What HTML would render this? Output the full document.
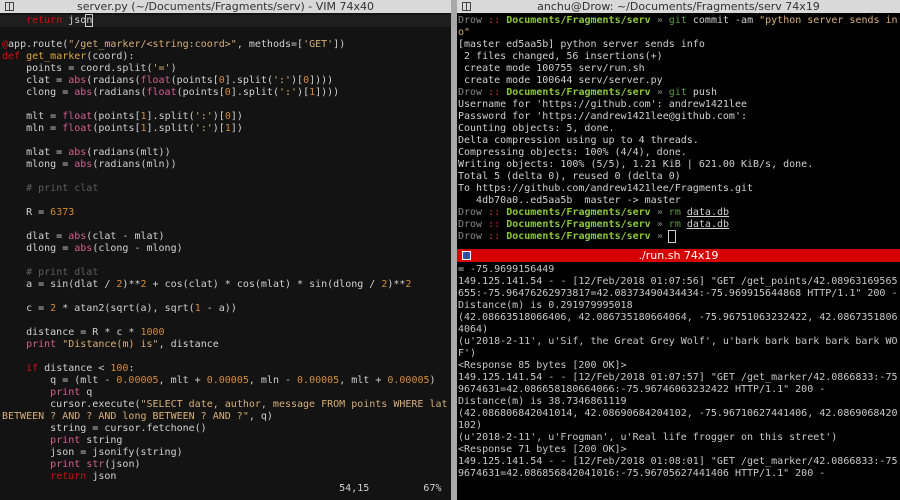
<!DOCTYPE html>
<html><head><meta charset="utf-8"><style>
*{margin:0;padding:0;box-sizing:border-box}
body{width:900px;height:500px;background:#000;overflow:hidden;position:relative;font-family:"DejaVu Sans Mono","Liberation Mono",monospace;font-size:10px;line-height:12px;color:#d0d0d0}
.title{position:absolute;height:13px;background:#d9d9d9;color:#333;font-family:"DejaVu Sans","Liberation Sans",sans-serif;font-size:11px;line-height:13px;text-align:center}
.ico{position:absolute;left:5px;top:2px;width:9px;height:9px;border:1px solid #444}
.ico:after{content:"";position:absolute;left:3px;top:0;width:1px;height:7px;background:#444}
pre{font:inherit;white-space:pre;position:absolute}
#left{position:absolute;left:0;top:13px;width:451px;height:487px;background:#131313}
#div{position:absolute;left:451px;top:0;width:6px;height:500px;background:#a8a8a8}
#rt{position:absolute;left:457px;top:13px;width:443px;height:236px;background:#000}
#rb{position:absolute;left:457px;top:262px;width:443px;height:238px;background:#000}
.cl{position:absolute;left:0;top:2px;width:451px;height:12px;background:#1e1e1e}
.k{color:#d01010}.p{color:#d35f8a}.s{color:#d7ae78}.n{color:#d48a3a}.f{color:#d7a640}.c{color:#5e5e5e}
.g{color:#8a8a8a}.r{color:#c83030}.b{color:#8cc83a;font-weight:bold}.gt{color:#5c9a3a}.u{text-decoration:underline}
</style></head><body>
<div class="title" style="left:0;top:0;width:451px"><span class="ico"></span>server.py (~/Documents/Fragments/serv) - VIM 74x40</div>
<div class="title" style="left:457px;top:0;width:443px"><span class="ico"></span>anchu@Drow: ~/Documents/Fragments/serv 74x19</div>
<div id="div"></div>
<div id="left"><div class="cl"></div><pre style="left:2px;top:2px">    <span class="k">return</span> jso<span style="outline:1px solid #ccc">n</span>

<span class="k">@</span>app.route(<span class="s">"/get_marker/&lt;string:coord&gt;"</span>, methods=[<span class="s">'GET'</span>])
<span class="k">def</span> <span class="f">get_marker</span>(coord):
    points = coord.split(<span class="s">'='</span>)
    clat = <span class="p">abs</span>(radians(<span class="p">float</span>(points[<span class="n">0</span>].split(<span class="s">':'</span>)[<span class="n">0</span>])))
    clong = <span class="p">abs</span>(radians(<span class="p">float</span>(points[<span class="n">0</span>].split(<span class="s">':'</span>)[<span class="n">1</span>])))

    mlt = <span class="p">float</span>(points[<span class="n">1</span>].split(<span class="s">':'</span>)[<span class="n">0</span>])
    mln = <span class="p">float</span>(points[<span class="n">1</span>].split(<span class="s">':'</span>)[<span class="n">1</span>])

    mlat = <span class="p">abs</span>(radians(mlt))
    mlong = <span class="p">abs</span>(radians(mln))

    <span class="c"># print clat</span>

    R = <span class="n">6373</span>

    dlat = <span class="p">abs</span>(clat - mlat)
    dlong = <span class="p">abs</span>(clong - mlong)

    <span class="c"># print dlat</span>
    a = sin(dlat / <span class="n">2</span>)**<span class="n">2</span> + cos(clat) * cos(mlat) * sin(dlong / <span class="n">2</span>)**<span class="n">2</span>

    c = <span class="n">2</span> * atan2(sqrt(a), sqrt(<span class="n">1</span> - a))

    distance = R * c * <span class="n">1000</span>
    <span class="p">print</span> <span class="s">"Distance(m) is"</span>, distance

    <span class="k">if</span> distance &lt; <span class="n">100</span>:
        q = (mlt - <span class="n">0.00005</span>, mlt + <span class="n">0.00005</span>, mln - <span class="n">0.00005</span>, mlt + <span class="n">0.00005</span>)
        <span class="p">print</span> q
        cursor.execute(<span class="s">"SELECT date, author, message FROM points WHERE lat</span>
<span class="s">BETWEEN ? AND ? AND long BETWEEN ? AND ?"</span>, q)
        string = cursor.fetchone()
        <span class="p">print</span> string
        json = jsonify(string)
        <span class="p">print</span> <span class="p">str</span>(json)
        <span class="k">return</span> json
                                                        54,15         67%</pre></div>
<div id="rt"><pre style="left:1px;top:2px"><span class="g">Drow</span> <span class="r">::</span> <span class="b">Documents/Fragments/serv</span> <span class="g">»</span> <span class="gt">git</span> commit -am <span class="s">"python server sends in</span>
<span class="s">o"</span>
[master ed5aa5b] python server sends info
 2 files changed, 56 insertions(+)
 create mode 100755 serv/run.sh
 create mode 100644 serv/server.py
<span class="g">Drow</span> <span class="r">::</span> <span class="b">Documents/Fragments/serv</span> <span class="g">»</span> <span class="gt">git</span> push
Username for 'https://github.com': andrew1421lee
Password for 'https://andrew1421lee@github.com':
Counting objects: 5, done.
Delta compression using up to 4 threads.
Compressing objects: 100% (4/4), done.
Writing objects: 100% (5/5), 1.21 KiB | 621.00 KiB/s, done.
Total 5 (delta 0), reused 0 (delta 0)
To https://github.com/andrew1421lee/Fragments.git
   4db70a0..ed5aa5b  master -&gt; master
<span class="g">Drow</span> <span class="r">::</span> <span class="b">Documents/Fragments/serv</span> <span class="g">»</span> <span class="gt">rm</span> <span class="u">data.db</span>
<span class="g">Drow</span> <span class="r">::</span> <span class="b">Documents/Fragments/serv</span> <span class="g">»</span> <span class="gt">rm</span> <span class="u">data.db</span>
<span class="g">Drow</span> <span class="r">::</span> <span class="b">Documents/Fragments/serv</span> <span class="g">»</span> <span style="outline:1px solid #ccc">&nbsp;</span></pre></div>
<div class="title" style="left:457px;top:249px;width:443px;background:#d60000;color:#fff"><span class="ico" style="border-color:#fff;background:#3050c0"></span>./run.sh 74x19</div>
<div id="rb"><pre style="left:1px;top:2px;color:#c8c8c8">= -75.9699156449
149.125.141.54 - - [12/Feb/2018 01:07:56] "GET /get_points/42.08963169565
655:-75.96476262973817=42.08373490434434:-75.969915644868 HTTP/1.1" 200 -
Distance(m) is 0.291979995018
(42.08663518066406, 42.086735180664064, -75.96751063232422, 42.0867351806
4064)
(u'2018-2-11', u'Sif, the Great Grey Wolf', u'bark bark bark bark bark WO
F')
&lt;Response 85 bytes [200 OK]&gt;
149.125.141.54 - - [12/Feb/2018 01:07:57] "GET /get_marker/42.0866833:-75
9674631=42.086658180664066:-75.96746063232422 HTTP/1.1" 200 -
Distance(m) is 38.7346861119
(42.086806842041014, 42.08690684204102, -75.96710627441406, 42.0869068420
102)
(u'2018-2-11', u'Frogman', u'Real life frogger on this street')
&lt;Response 71 bytes [200 OK]&gt;
149.125.141.54 - - [12/Feb/2018 01:08:01] "GET /get_marker/42.0866833:-75
9674631=42.086856842041016:-75.96705627441406 HTTP/1.1" 200 -</pre></div>
</body></html>
